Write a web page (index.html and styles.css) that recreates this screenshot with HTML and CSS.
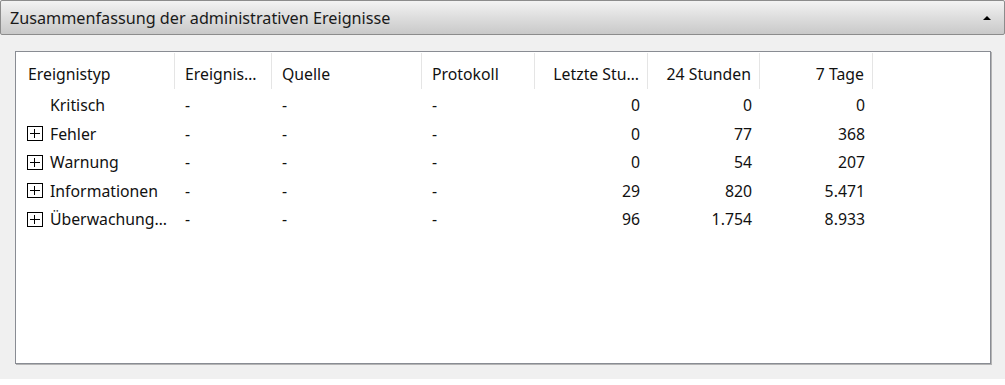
FILE: index.html
```html
<!DOCTYPE html>
<html lang="de">
<head>
  <meta charset="UTF-8">
  <title>Zusammenfassung der administrativen Ereignisse</title>
  <link rel="stylesheet" href="styles.css">
</head>
<body>

  <div class="panel">
    <div class="panel-head">
      <span class="panel-title">Zusammenfassung der administrativen Ereignisse</span>
      <span class="collapse-arrow"></span>
    </div>

    <div class="panel-body">
      <div class="listview">
        <div class="row head">
          <div class="cell">Ereignistyp</div>
          <div class="cell">Ereignis…</div>
          <div class="cell">Quelle</div>
          <div class="cell">Protokoll</div>
          <div class="cell num">Letzte Stu…</div>
          <div class="cell num">24 Stunden</div>
          <div class="cell num">7 Tage</div>
        </div>

        <div class="row">
          <div class="cell type"><span class="expander none"></span>Kritisch</div>
          <div class="cell">-</div>
          <div class="cell">-</div>
          <div class="cell">-</div>
          <div class="cell num">0</div>
          <div class="cell num">0</div>
          <div class="cell num">0</div>
        </div>
        <div class="row">
          <div class="cell type"><span class="expander"></span>Fehler</div>
          <div class="cell">-</div>
          <div class="cell">-</div>
          <div class="cell">-</div>
          <div class="cell num">0</div>
          <div class="cell num">77</div>
          <div class="cell num">368</div>
        </div>
        <div class="row">
          <div class="cell type"><span class="expander"></span>Warnung</div>
          <div class="cell">-</div>
          <div class="cell">-</div>
          <div class="cell">-</div>
          <div class="cell num">0</div>
          <div class="cell num">54</div>
          <div class="cell num">207</div>
        </div>
        <div class="row">
          <div class="cell type"><span class="expander"></span>Informationen</div>
          <div class="cell">-</div>
          <div class="cell">-</div>
          <div class="cell">-</div>
          <div class="cell num">29</div>
          <div class="cell num">820</div>
          <div class="cell num">5.471</div>
        </div>
        <div class="row">
          <div class="cell type"><span class="expander"></span>Überwachung…</div>
          <div class="cell">-</div>
          <div class="cell">-</div>
          <div class="cell">-</div>
          <div class="cell num">96</div>
          <div class="cell num">1.754</div>
          <div class="cell num">8.933</div>
        </div>
      </div>
    </div>
  </div>

</body>
</html>
```

FILE: styles.css
```css
body {
  margin: 0;
  background: #ffffff;
  font-family: "Noto Sans", "Open Sans", sans-serif;
  color: #111;
}

.panel {
  width: 1005px;
  background: #f0f0f0;
  padding-bottom: 15px;
}

/* title bar */
.panel-head {
  height: 33px;
  box-sizing: content-box;
  border: 1px solid #8c8c8c;
  border-radius: 2px;
  background: linear-gradient(#f3f3f3, #d9d9d9 60%, #c9c9c9);
  display: flex;
  align-items: center;
  justify-content: space-between;
  padding: 0 13px 0 9px;
}

.panel-title {
  font-size: 16.2px;
  color: #1a1a1a;
}

.collapse-arrow {
  width: 0;
  height: 0;
  border-left: 4px solid transparent;
  border-right: 4px solid transparent;
  border-bottom: 4px solid #000;
}

.panel-body {
  padding: 16px 14px 0 15px;
}

/* list */
.listview {
  height: 311px;
  background: #fff;
  border: 1px solid #898c93;
  box-shadow: 1px 1px 0 #b4b4b4;
  font-size: 15.8px;
}

.row {
  display: grid;
  grid-template-columns: 159px 97px 150px 113px 113px 112px 113px;
  height: 28.5px;
  line-height: 28.5px;
}

.row.head {
  height: 37px;
  line-height: 28px;
  padding-top: 8px;
  box-sizing: border-box;
  margin-bottom: 2px;
}

.cell {
  padding: 0 8px 0 10px;
  white-space: nowrap;
}

.row .cell:first-child {
  padding-left: 12px;
}

.head .cell {
  border-right: 1px solid #e5e5e5;
  margin-top: -7px;
  padding-top: 7px;
}

.num {
  text-align: right;
}

.type {
  display: flex;
  align-items: center;
  padding-left: 11px !important;
}

.expander {
  width: 16px;
  height: 15px;
  box-sizing: border-box;
  border: 1px solid #000;
  margin-right: 7px;
  position: relative;
}

.expander::before,
.expander::after {
  content: "";
  position: absolute;
  background: #000;
}

.expander::before {
  left: 2px;
  right: 2px;
  top: 6px;
  height: 1px;
}

.expander::after {
  top: 2px;
  bottom: 2px;
  left: 6px;
  width: 1px;
}

.expander.none {
  border-color: transparent;
}

.expander.none::before,
.expander.none::after {
  display: none;
}
```
